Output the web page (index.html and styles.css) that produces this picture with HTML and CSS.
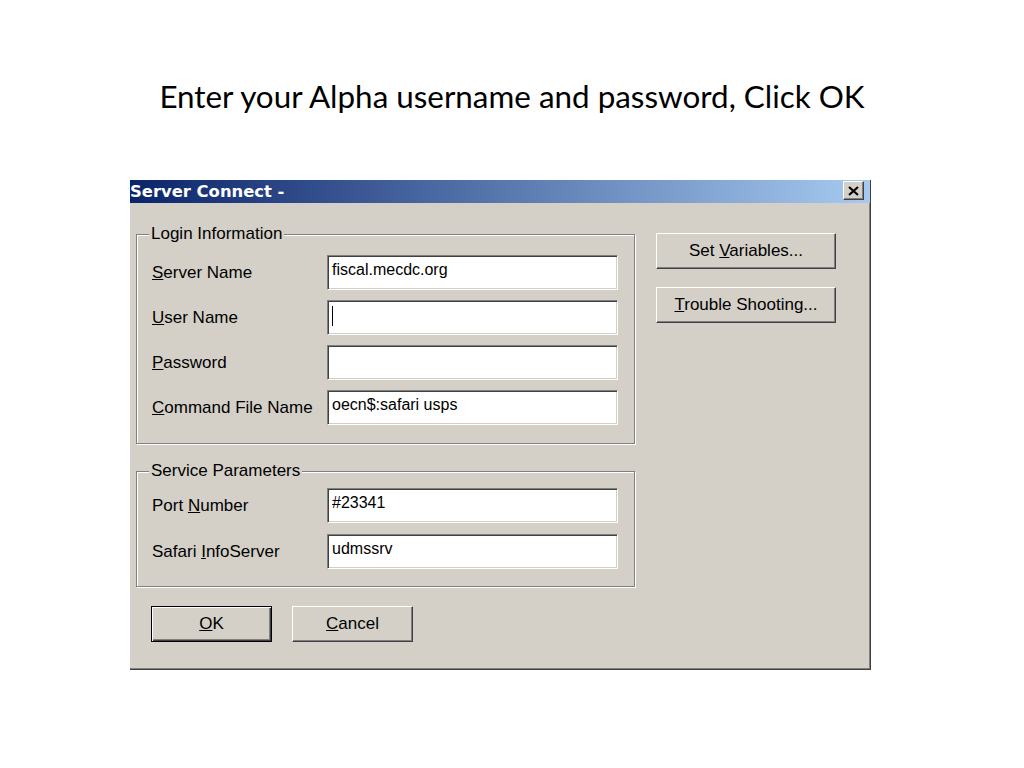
FILE: index.html
```html
<!DOCTYPE html>
<html lang="en">

<head>
    <meta charset="UTF-8">
    <title>Server Connect</title>
    <link rel="stylesheet" href="styles.css">
</head>

<body>
    <h1 class="slide-title">Enter your Alpha username and password, Click OK</h1>

    <div class="dialog">
        <div class="titlebar">
            <span class="title-text">Server Connect -</span>
            <span class="close-btn">
                <svg width="11" height="10" viewBox="0 0 11 10">
                    <path d="M1 1 L10 9 M10 1 L1 9" stroke="#000" stroke-width="2.2" fill="none"/>
                </svg>
            </span>
        </div>
        <div class="dialog-body">
            <div class="left-col">
                <div class="group login">
                    <span class="legend">Login Information</span>
                    <div class="row">
                        <label><u>S</u>erver Name</label>
                        <div class="field">fiscal.mecdc.org</div>
                    </div>
                    <div class="row">
                        <label><u>U</u>ser Name</label>
                        <div class="field"><span class="caret"></span></div>
                    </div>
                    <div class="row">
                        <label><u>P</u>assword</label>
                        <div class="field"></div>
                    </div>
                    <div class="row">
                        <label><u>C</u>ommand File Name</label>
                        <div class="field">oecn$:safari usps</div>
                    </div>
                </div>

                <div class="group service">
                    <span class="legend">Service Parameters</span>
                    <div class="row">
                        <label>Port <u>N</u>umber</label>
                        <div class="field">#23341</div>
                    </div>
                    <div class="row">
                        <label>Safari <u>I</u>nfoServer</label>
                        <div class="field">udmssrv</div>
                    </div>
                </div>

                <div class="actions">
                    <button class="btn default"><u>O</u>K</button>
                    <button class="btn"><u>C</u>ancel</button>
                </div>
            </div>

            <div class="right-col">
                <button class="btn wide">Set <u>V</u>ariables...</button>
                <button class="btn wide"><u>T</u>rouble Shooting...</button>
            </div>
        </div>
    </div>
</body>

</html>
```

FILE: styles.css
```css
body {
    margin: 0;
    background: #fff;
    font-family: "Liberation Sans", Arial, sans-serif;
    color: #000;
}

.slide-title {
    margin: 0;
    height: 180px;
    box-sizing: border-box;
    padding-top: 78px;
    text-align: center;
    font-family: Lato, "Liberation Sans", sans-serif;
    font-weight: normal;
    font-size: 31.4px;
    line-height: 36px;
}

.dialog {
    margin-left: 130px;
    width: 741px;
    height: 490px;
    box-sizing: border-box;
    background: #d4d0c8;
    border-right: 1px solid #404040;
    border-bottom: 1px solid #404040;
    box-shadow: inset -1px -1px 0 #808080;
    overflow: hidden;
}

/* title bar */
.titlebar {
    height: 23px;
    background: linear-gradient(to right, #0a246a, #a6caf0);
    display: flex;
    align-items: center;
    justify-content: space-between;
    padding-right: 6px;
}
.title-text {
    margin-left: 0;
    color: #fff;
    font-family: "DejaVu Sans", Verdana, sans-serif;
    font-weight: bold;
    font-size: 16.4px;
}
.close-btn {
    width: 21px;
    height: 19px;
    box-sizing: border-box;
    margin-top: -2px;
    background: #d4d0c8;
    border: 1px solid;
    border-color: #fff #404040 #404040 #fff;
    box-shadow: inset -1px -1px 0 #808080;
    display: flex;
    align-items: center;
    justify-content: center;
}

/* body */
.dialog-body {
    display: flex;
    padding: 31px 0 0 6px;
}
.left-col {
    width: 499px;
}
.right-col {
    margin-left: 21px;
    margin-top: -1px;
    display: flex;
    flex-direction: column;
    gap: 18px;
}

.group {
    position: relative;
    border: 1px solid #808080;
    box-shadow: inset 1px 1px 0 #fff, 1px 1px 0 #fff;
    display: flex;
    flex-direction: column;
    gap: 10px;
    padding: 20px 16px 18px 15px;
}
.group.service {
    margin-top: 27px;
    padding-top: 16px;
    padding-bottom: 17px;
    gap: 11px;
}
.legend {
    position: absolute;
    top: -11px;
    left: 12px;
    padding: 0 2px;
    background: #d4d0c8;
    font-size: 17px;
    line-height: 20px;
}

.row {
    display: flex;
    align-items: center;
}
.row label {
    width: 175px;
    font-size: 17px;
}
.field {
    width: 291px;
    height: 35px;
    box-sizing: border-box;
    background: #fff;
    border: 1px solid;
    border-color: #808080 #fff #fff #808080;
    box-shadow: inset 1px 1px 0 #404040, inset -1px -1px 0 #d4d0c8;
    padding: 3px 4px 0;
    font-size: 16px;
    line-height: 22px;
    display: flex;
    align-items: flex-start;
}
.caret {
    width: 1px;
    height: 20px;
    margin-top: 2px;
    background: #000;
}

/* buttons */
.btn {
    width: 121px;
    height: 36px;
    box-sizing: border-box;
    background: #d4d0c8;
    border: 1px solid;
    border-color: #fff #404040 #404040 #fff;
    box-shadow: inset -1px -1px 0 #808080;
    font-family: "Liberation Sans", Arial, sans-serif;
    font-size: 17px;
    color: #000;
    padding: 0;
}
.btn.default {
    border: 1px solid #000;
    box-shadow: inset 1px 1px 0 #fff, inset -1px -1px 0 #404040, inset -2px -2px 0 #808080;
}
.btn.wide {
    width: 180px;
}

.actions {
    display: flex;
    gap: 20px;
    margin: 19px 0 0 15px;
}
```
